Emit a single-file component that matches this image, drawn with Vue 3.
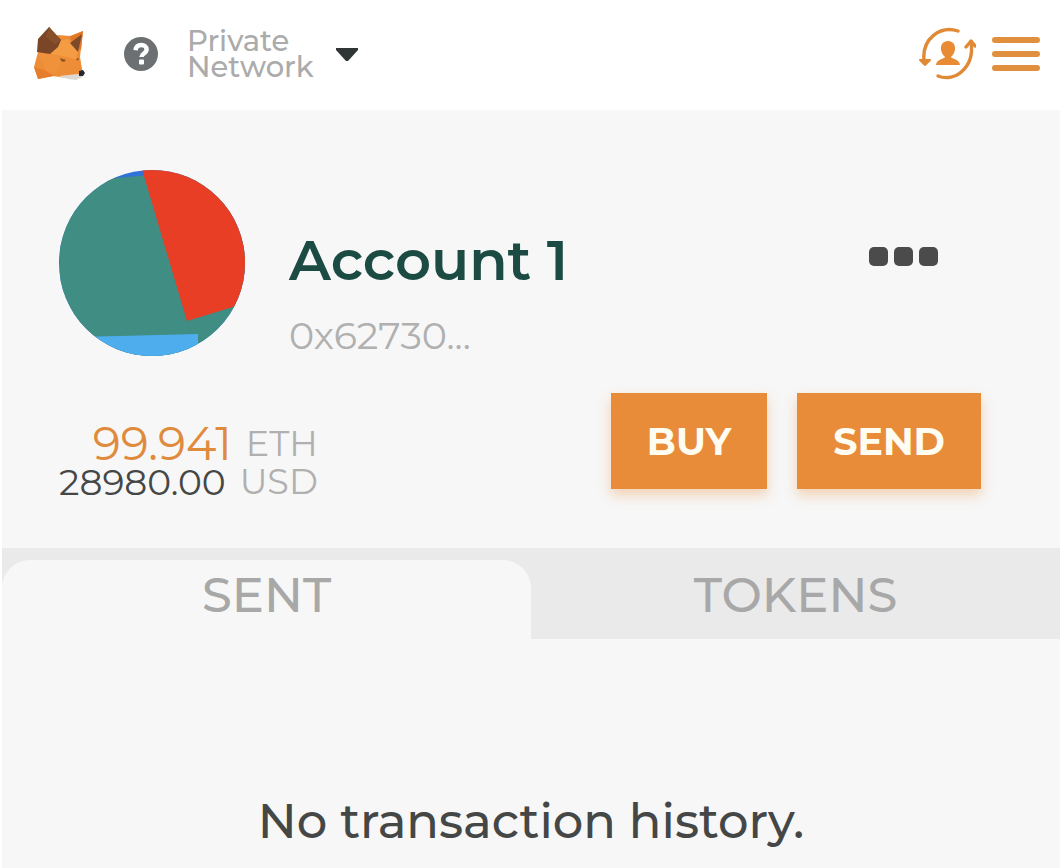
<template>
  <div class="wallet">
    <header class="app-header">
      <svg class="fox-logo" viewBox="0 0 54 58" role="img" aria-label="Fox logo">
        <path fill="#ee8d37" d="M24 10 36 11 49 6 46 32 49 50 39 54 19 51 4 54 0 42 4 27Z" />
        <path fill="#f49c43" d="M25 16 34 14 44 27 42 34 28 31 16 29Z" />
        <path fill="#f0923c" d="M4 28 16 29 28 32 22 49 12 46Z" />
        <path fill="#e67d2b" d="M0 42 12 46 20 51 4 54Z" />
        <path fill="#e07828" d="M49 6 47 25 42 22 35 12Z" />
        <path fill="#7a4627" d="M15 2 27 15 24 22 16 29 3 27 4 14Z" />
        <path fill="#87502b" d="M15 2 27 15 21 19 12 12Z" />
        <path fill="#7d4a2a" d="M48 9 44 27 36 18Z" />
        <path fill="#8e5628" d="M26 33 32 35 30 37 27 36ZM42 34 45 33 44 36Z" />
        <path fill="#dcd9d4" d="M25 51 44 49 49 52 42 55 34 54Z" />
        <path fill="#25292d" d="m45 46 4-1 2 3-2 3-4 0Z" />
      </svg>
      <button class="icon-button help-button" type="button" aria-label="Help">
        <svg viewBox="0 0 34 34" aria-hidden="true">
          <circle cx="17" cy="17" r="17" fill="#6c7072" />
          <path
            d="M11.5 13.2c.5-3.7 3-5.2 5.8-5.2 3 0 5.3 1.8 5.3 4.5 0 4-5.1 3.9-5.1 7.5"
            fill="none"
            stroke="#fff"
            stroke-width="4.500"
          />
          <rect x="15" y="22.5" width="5" height="5" rx="1" fill="#fff" />
        </svg>
      </button>
      <button class="network-button" type="button" aria-haspopup="listbox">
        <span class="network-name">Private<br />Network</span>
        <svg class="network-caret" viewBox="0 0 22 13" aria-hidden="true">
          <path d="M0 0h22v2L12 13h-2L0 2Z" fill="#303536" />
        </svg>
      </button>
      <div class="header-actions">
        <button class="icon-button accounts-button" type="button" aria-label="Switch account">
          <svg viewBox="0 0 58 54" aria-hidden="true">
            <g fill="none" stroke="#e08a35" stroke-width="3.4" stroke-linecap="round" stroke-linejoin="round">
              <path d="M40 4C22-2 4 12 6 33" />
              <path d="M20 49C37 56 57 40 53 15" />
              <path d="m48 20 5-6 4 5" />
            </g>
            <path d="M2 33 12 33 7 38Z" fill="#e08a35" stroke="#e08a35" stroke-width="2" stroke-linejoin="round" />
            <path
              d="M30 14c5 0 7.500 4 7 8.500-.4 3.400-2 5.500-4 7.500.5 2 8.500 2 9 8h-24c.5-6 8.500-6 9-8-2-2-3.600-4.100-4-7.500-.5-4.500 2-8.500 7-8.500Z"
              fill="#e98a35"
            />
          </svg>
        </button>
        <button class="icon-button menu-button" type="button" aria-label="Menu">
          <span></span>
          <span></span>
          <span></span>
        </button>
      </div>
    </header>

    <main>
      <section class="account">
        <div class="account-summary">
          <svg class="identicon" viewBox="0 0 186 186" aria-hidden="true">
            <defs>
              <clipPath id="identicon-clip">
                <circle cx="93" cy="93" r="93" />
              </clipPath>
            </defs>
            <g clip-path="url(#identicon-clip)">
              <rect width="186" height="186" fill="#2f73d9" />
              <path d="M2 0H30L58 8 90 5 186 0V186H0V116L1 104 1 80Z" fill="#3f8d83" />
              <path d="M82-4 128 151 190 132V-4Z" fill="#e83e25" />
              <path d="M20 167 139 164 139 186H20Z" fill="#4eaeed" />
            </g>
          </svg>
          <div class="account-details">
            <h1 class="account-name">Account 1</h1>
            <p class="account-address">0x62730...</p>
          </div>
          <button class="icon-button more-button" type="button" aria-label="Account options">
            <span></span>
            <span></span>
            <span></span>
          </button>
        </div>

        <div class="account-funds">
          <div class="balances">
            <p v-for="balance in balances" :key="balance.unit" class="balance">
              <span :class="['amount', `amount--${balance.unit.toLowerCase()}`]">{{ balance.amount }}</span>
              <span class="unit">{{ balance.unit }}</span>
            </p>
          </div>
          <div class="actions">
            <button class="action-button" type="button">BUY</button>
            <button class="action-button" type="button">SEND</button>
          </div>
        </div>
      </section>

      <div class="tabs" role="tablist">
        <button
          v-for="tab in tabs"
          :id="`tab-${tab}`"
          :key="tab"
          type="button"
          role="tab"
          aria-controls="history"
          :aria-selected="activeTab === tab"
          :class="['tab', { 'tab--active': activeTab === tab }]"
          @click="activeTab = tab"
        >
          {{ tab }}
        </button>
      </div>

      <section id="history" class="history" role="tabpanel" :aria-labelledby="`tab-${activeTab}`">
        <p>No transaction history.</p>
      </section>
    </main>
  </div>
</template>

<script setup>
import { ref } from 'vue'

const balances = [
  { amount: '99.941', unit: 'ETH' },
  { amount: '28980.00', unit: 'USD' }
]

const tabs = ['SENT', 'TOKENS']
const activeTab = ref('SENT')
</script>

<style>
body {
  margin: 0;
  background: #ffffff;
}
</style>

<style scoped>
.wallet {
  display: flex;
  flex-direction: column;
  box-sizing: border-box;
  min-height: 100vh;
  padding-left: 2px;
  font-family: Montserrat, Inter, sans-serif;
  color: #444746;
}

button {
  padding: 0;
  border: 0;
  background: none;
  font-family: inherit;
  cursor: pointer;
}

svg {
  display: block;
}

main {
  flex: 1;
  background: #f7f7f7;
}

.app-header {
  display: flex;
  align-items: center;
  height: 110px;
  padding: 0 20px 2px 32px;
  box-sizing: border-box;
}

.fox-logo {
  width: 54px;
  height: 58px;
}

.help-button {
  width: 34px;
  margin-left: 36px;
}

.network-button {
  display: flex;
  align-items: center;
  gap: 22px;
  margin-left: 29px;
}

.network-name {
  font-size: 29px;
  font-weight: 500;
  line-height: 26px;
  text-align: left;
  color: #ababab;
}

.network-caret {
  width: 22px;
  height: 13px;
}

.header-actions {
  display: flex;
  align-items: center;
  gap: 16px;
  margin-left: auto;
}

.accounts-button {
  width: 58px;
}

.menu-button {
  display: flex;
  flex-direction: column;
  gap: 8px;
  width: 48px;
}

.menu-button span {
  width: 100%;
  height: 6px;
  border-radius: 3px;
  background: #e08f3e;
}

.account {
  padding: 60px 79px 47px 57px;
}

.account-summary {
  display: flex;
}

.identicon {
  flex: none;
  width: 186px;
  height: 186px;
}

.account-details {
  flex: 1;
  margin: 56px 0 0 44px;
}

.account-name {
  margin: 0;
  font-size: 56px;
  font-weight: 600;
  line-height: 68px;
  color: #1b4b43;
}

.account-address {
  margin: 20px 0 0;
  font-size: 38px;
  font-weight: 400;
  line-height: 44px;
  color: #b0b0b0;
}

.more-button {
  display: flex;
  align-self: flex-start;
  gap: 6px;
  margin: 77px 43px 0 0;
}

.more-button span {
  width: 19px;
  height: 19px;
  border-radius: 5px;
  background: #4b4b4b;
}

.account-funds {
  display: flex;
  align-items: flex-start;
  justify-content: space-between;
  margin-top: 35px;
}

.balances {
  margin-top: 32px;
}

.balance {
  display: flex;
  align-items: center;
  justify-content: flex-end;
  gap: 14px;
  height: 38px;
  margin: 0;
  line-height: 38px;
}

.amount--eth {
  font-size: 46px;
  color: #e08a3c;
}

.amount--usd {
  font-size: 36px;
}

.unit {
  font-size: 35px;
  color: #b0b0b0;
}

.actions {
  display: flex;
  gap: 30px;
}

.action-button {
  height: 96px;
  padding: 0 36px;
  font-size: 38px;
  font-weight: 700;
  color: #fffdf2;
  background: #e88c39;
  box-shadow: 0 6px 12px rgba(232, 140, 57, 0.36);
}

.tabs {
  display: grid;
  grid-template-columns: 1fr 1fr;
  padding-top: 12px;
  background: #eaeaea;
}

.tab {
  height: 79px;
  padding-bottom: 10px;
  font-size: 48px;
  font-weight: 500;
  color: #a8a8a8;
}

.tab--active {
  border-radius: 28px 28px 0 0;
  background: #f7f7f7;
}

.history {
  padding: 152px 0 16px;
  text-align: center;
}

.history p {
  margin: 0;
  font-size: 48px;
  font-weight: 500;
  line-height: 60px;
}
</style>
